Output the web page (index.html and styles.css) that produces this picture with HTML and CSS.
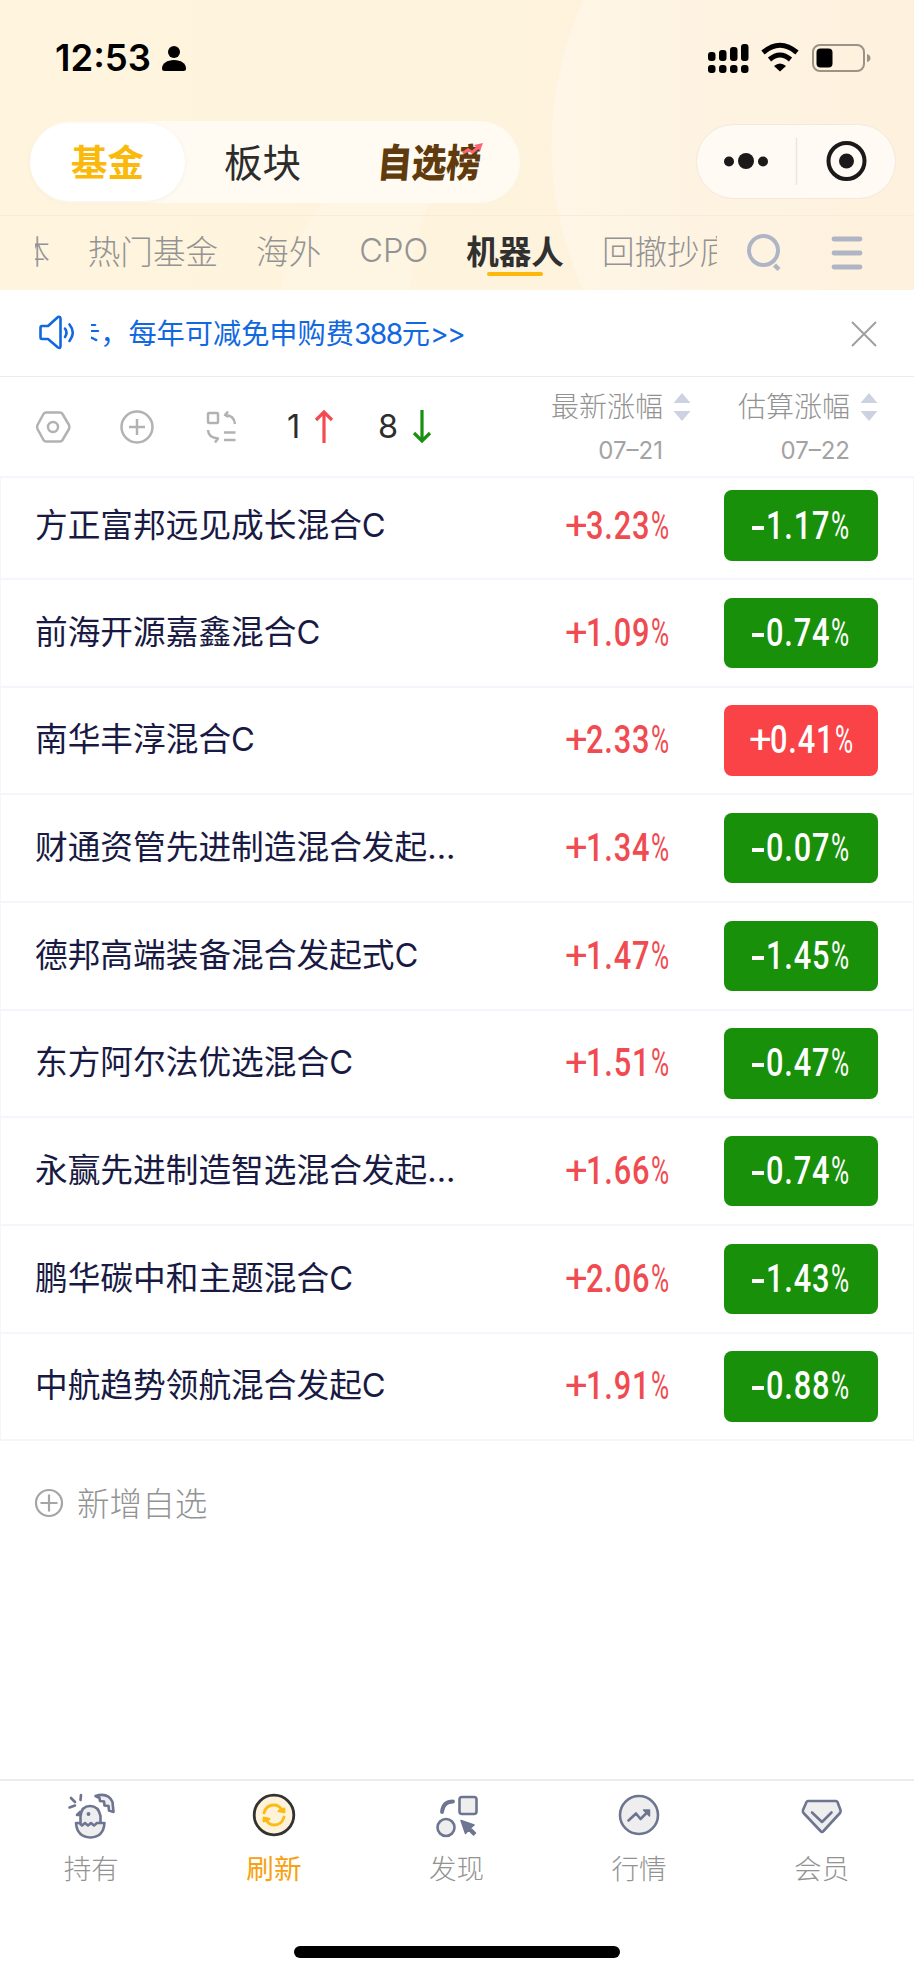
FILE: index.html
```html
<!DOCTYPE html>
<html lang="zh-CN">
<head>
<meta charset="utf-8">
<title>自选基金</title>
<link rel="stylesheet" href="styles.css">
</head>
<body>
<div class="app">
  <header class="header">
    <svg class="header-bg" width="914" height="290" viewBox="0 0 914 290">
      <defs>
        <linearGradient id="bg" x1="0" y1="0" x2="1" y2="0"><stop offset="0" stop-color="#fff5df"/><stop offset=".5" stop-color="#fef3dd"/><stop offset="1" stop-color="#fef1dd"/></linearGradient>
        <linearGradient id="arc" x1="0" y1="0" x2="1" y2="0"><stop offset="0" stop-color="#fff6e7"/><stop offset=".45" stop-color="#fef3e1"/><stop offset="1" stop-color="#fef1de"/></linearGradient>
      </defs>
      <rect width="914" height="290" fill="url(#bg)"/>
      <path d="M583 0Q520 145 583 290H914V0Z" fill="url(#arc)"/>
      <path d="M325 200Q300 230 280 290H410Q415 240 430 200Z" fill="#fff8ea" opacity=".4"/>
    </svg>
    <div class="status">
      <span class="clock">12:53</span>
      <svg class="person" width="24" height="26" viewBox="0 0 24 26"><circle cx="12" cy="6" r="6"/><path d="M0 22.500C0 17.500 5 14 12 14S24 17.500 24 22.500Q24 25 21.500 25H2.500Q0 25 0 22.500Z"/></svg>
      <svg class="signal" width="164" height="32" viewBox="0 0 164 32">
        <g><rect x="0" y="9" width="7.500" height="9" rx="3"/><rect x="11" y="7" width="7.500" height="11" rx="3"/><rect x="22" y="4" width="7.500" height="14" rx="3"/><rect x="33" y="1" width="7.500" height="17" rx="3"/><rect x="0" y="22" width="7.500" height="8" rx="3"/><rect x="11" y="22" width="7.500" height="8" rx="3"/><rect x="22" y="22" width="7.500" height="8" rx="3"/><rect x="33" y="22" width="7.500" height="8" rx="3"/></g>
        <g fill="none" stroke="#000" stroke-width="5"><path d="M55 9.500Q72 -5 89 9.500"/><path d="M61.500 16.500Q72 7.500 82.500 16.500"/></g>
        <path d="M66 23Q72 18 78 23L72 28.500Z"/>
        <rect x="105" y="2" width="51" height="26" rx="7" fill="none" stroke="#9b9383" stroke-width="2"/><rect x="108.500" y="5.500" width="16" height="19" rx="4"/><path d="M159 11Q162.500 12 162.500 15T159 19Z" fill="#9b9383"/>
      </svg>
    </div>
    <div class="switcher">
      <div class="segments">
        <div class="segment segment-on">基金</div>
        <div class="segment">板块</div>
        <div class="segment segment-rank"><span class="rank">自选榜</span>
          <svg class="rank-arrow" width="22" height="14" viewBox="0 0 22 14"><path d="M0 10L6 6L10 8.500L14 5L12 3L21 1L18 9L16.500 7L10.500 12L7 9.500L2 12Z" fill="#fd6570"/></svg>
        </div>
      </div>
      <svg class="capsule" width="200" height="76" viewBox="0 0 200 76">
        <rect x=".5" y=".5" width="199" height="74" rx="37" fill="#fffaf3" stroke="#f2e9dc"/>
        <circle cx="33" cy="37.500" r="5" fill="#1b191a"/><circle cx="50" cy="37" r="8" fill="#1b191a"/><circle cx="67" cy="37.500" r="5" fill="#1b191a"/>
        <path d="M100.500 14V61" stroke="#ece5dc" stroke-width="1.500"/>
        <circle cx="150.500" cy="37" r="18" fill="none" stroke="#1b191a" stroke-width="4"/><circle cx="150.500" cy="37" r="7.500" fill="#1b191a"/>
      </svg>
    </div>
    <nav class="groups">
      <div class="group-scroll">
        <span class="group">半导体</span><span class="group">热门基金</span><span class="group">海外</span><span class="group latin">CPO</span><span class="group group-on">机器人</span><span class="group">回撤抄底</span>
      </div>
      <svg class="group-tools" width="120" height="40" viewBox="0 0 120 40" fill="none" stroke="#b0b5c5" stroke-width="4">
        <circle cx="17.500" cy="18.500" r="14.500"/><path d="M28.500 33L33 37.500" stroke-width="4.500"/><path d="M88 7H114M88 21H114M88 35H114" stroke-width="4.800" stroke-linecap="round"/>
      </svg>
    </nav>
  </header>

  <div class="notice">
    <svg class="horn" width="36" height="36" viewBox="0 0 36 36" fill="none" stroke="#1268df" stroke-width="2.600" stroke-linejoin="round" stroke-linecap="round"><path d="M3 11H9L19 2Q21.500 1 21.500 4V31Q21.500 34 19 32.500L9 24H3Q1.500 24 1.500 22V13Q1.500 11 3 11Z"/><path d="M26 13.500Q29 17.500 26 22M30.500 9.500Q37 17.500 30.500 26"/></svg>
    <div class="notice-clip"><span class="notice-text">卡，每年可减免申购费<span class="latin">388</span>元<span class="latin">&gt;&gt;</span></span></div>
    <svg class="close" width="26" height="26" viewBox="0 0 26 26" stroke="#a0a0a0" stroke-width="2"><path d="M1 1L25 25M25 1L1 25"/></svg>
  </div>

  <div class="toolbar">
    <svg class="tools" width="202" height="34" viewBox="0 0 202 34" fill="none" stroke="#b2b2b2" stroke-width="2.500" stroke-linejoin="round">
      <path d="M10 2.500H24Q25.500 2.500 26.500 4L33 15Q34 17 33 19L26.500 30Q25.500 31.500 24 31.500H10Q8.500 31.500 7.500 30L1.500 19Q.5 17 1.500 15L7.500 4Q8.500 2.500 10 2.500Z"/><circle cx="17" cy="17" r="5"/>
      <circle cx="101" cy="17" r="15.500"/><path d="M93 17H109M101 9V25"/>
      <rect x="172" y="3" width="10" height="10" rx="1"/><path d="M192 1.500L189 5L192.500 7M189 5Q198 5 199 14M172 20Q172.500 28 182 28.500M179 32.500L182 28.500L177.500 27.500M188 22.500H199.500M188 30H199.500"/>
    </svg>
    <div class="count"><span>1</span><svg width="20" height="34" viewBox="0 0 20 34" fill="none" stroke="#f24b51" stroke-width="3.200"><path d="M10 33V2M2 10L10 2L18 10"/></svg></div>
    <div class="count count-down"><span>8</span><svg width="20" height="34" viewBox="0 0 20 34" fill="none" stroke="#1a9010" stroke-width="3.200"><path d="M10 0V31M2 23L10 31L18 23"/></svg></div>
    <div class="sort sort-latest"><div class="sort-title">最新涨幅</div><svg width="18" height="28" viewBox="0 0 18 28"><path d="M9 0L17.500 10H.5ZM9 28L17.500 18H.5Z" fill="#ccd2e2"/></svg><div class="sort-date">07–21</div></div>
    <div class="sort"><div class="sort-title">估算涨幅</div><svg width="18" height="28" viewBox="0 0 18 28"><path d="M9 0L17.500 10H.5ZM9 28L17.500 18H.5Z" fill="#ccd2e2"/></svg><div class="sort-date">07–22</div></div>
  </div>

  <main class="list">
    <div class="row row-first"><span class="name">方正富邦远见成长混合C</span><span class="latest num"><i class="plus">+</i><b>3.23</b><i class="pct">%</i></span><span class="badge num"><i class="minus"></i><b>1.17</b><i class="pct">%</i></span></div>
    <div class="row"><span class="name">前海开源嘉鑫混合C</span><span class="latest num"><i class="plus">+</i><b>1.09</b><i class="pct">%</i></span><span class="badge num"><i class="minus"></i><b>0.74</b><i class="pct">%</i></span></div>
    <div class="row"><span class="name">南华丰淳混合C</span><span class="latest num"><i class="plus">+</i><b>2.33</b><i class="pct">%</i></span><span class="badge badge-up num"><i class="plus">+</i><b>0.41</b><i class="pct">%</i></span></div>
    <div class="row"><span class="name">财通资管先进制造混合发起...</span><span class="latest num"><i class="plus">+</i><b>1.34</b><i class="pct">%</i></span><span class="badge num"><i class="minus"></i><b>0.07</b><i class="pct">%</i></span></div>
    <div class="row"><span class="name">德邦高端装备混合发起式C</span><span class="latest num"><i class="plus">+</i><b>1.47</b><i class="pct">%</i></span><span class="badge num"><i class="minus"></i><b>1.45</b><i class="pct">%</i></span></div>
    <div class="row"><span class="name">东方阿尔法优选混合C</span><span class="latest num"><i class="plus">+</i><b>1.51</b><i class="pct">%</i></span><span class="badge num"><i class="minus"></i><b>0.47</b><i class="pct">%</i></span></div>
    <div class="row"><span class="name">永赢先进制造智选混合发起...</span><span class="latest num"><i class="plus">+</i><b>1.66</b><i class="pct">%</i></span><span class="badge num"><i class="minus"></i><b>0.74</b><i class="pct">%</i></span></div>
    <div class="row"><span class="name">鹏华碳中和主题混合C</span><span class="latest num"><i class="plus">+</i><b>2.06</b><i class="pct">%</i></span><span class="badge num"><i class="minus"></i><b>1.43</b><i class="pct">%</i></span></div>
    <div class="row"><span class="name">中航趋势领航混合发起C</span><span class="latest num"><i class="plus">+</i><b>1.91</b><i class="pct">%</i></span><span class="badge num"><i class="minus"></i><b>0.88</b><i class="pct">%</i></span></div>
  </main>

  <div class="add">
    <svg width="28" height="28" viewBox="0 0 28 28" fill="none" stroke="#a5a5a5" stroke-width="2.200"><circle cx="14" cy="14" r="13"/><path d="M5.500 14H22.500M14 5.500V22.500"/></svg>
    <span>新增自选</span>
  </div>

  <footer class="tabbar">
    <div class="tab"><svg width="50" height="50" viewBox="0 0 50 50" fill="none" stroke="#6e7591" stroke-width="2.600" stroke-linejoin="round" stroke-linecap="round"><path d="M5 8L9 12M15 5L14.500 10M3.500 17.500L9 15.500"/><path d="M14.500 33V26Q15.500 16 24 16T34.500 26V33" fill="#eee"/><path d="M14 22L11 25H14"/><path d="M10 33H13.500L16 35.500L19 33L22 35.500L25 33L28 35.500L31 33H38.500Q37.500 47 24.500 47.500Q11 47 10 33Z" fill="#eee"/><path d="M29.500 6Q42 2 46.500 12L47.500 22L43 20.500L42.500 16L38.500 15.500L38 11.500L34 11L33.500 8Z" fill="#eee"/><circle cx="22.500" cy="24" r="1.200" fill="#6e7591" stroke-width="1.500"/></svg><span>持有</span></div>
    <div class="tab tab-on"><svg width="50" height="50" viewBox="0 0 50 50" fill="none"><circle cx="25" cy="25" r="19.800" fill="#fff2da" stroke="#323232" stroke-width="2.800"/><g stroke="#fbbb13" stroke-width="2.800" stroke-linecap="round" stroke-linejoin="round"><path d="M15 23Q17 15 25 15Q30 15 33 20M35 27Q33 35 25 35Q20 35 17 30"/><path d="M35 19V22L30 21ZM15 31V28L20 29Z" fill="#fbbb13"/></g></svg><span>刷新</span></div>
    <div class="tab"><svg width="50" height="50" viewBox="0 0 50 50" fill="none" stroke="#6e7591" stroke-width="2.600" stroke-linejoin="round" stroke-linecap="round"><path d="M11 22Q12 11.500 22 11.500" stroke-width="3.800"/><circle cx="15" cy="37.500" r="8.500" fill="#eee"/><rect x="28.500" y="7" width="17" height="17" rx="2.500" fill="#eee"/><path d="M30 30.500L43 35L39.500 38L44.500 43L42.500 45L37.500 40L34.500 43.500Z" fill="#6e7591" stroke-width="1.500"/></svg><span>发现</span></div>
    <div class="tab"><svg width="50" height="50" viewBox="0 0 50 50" fill="none" stroke="#6e7591" stroke-width="2.600" stroke-linejoin="round" stroke-linecap="round"><circle cx="25" cy="25" r="19" fill="#eee"/><path d="M14.500 30.500L22 23.500L26.500 29L33.500 22"/><path d="M29.500 20H35.500V26Z" fill="#6e7591" stroke-width="1.500"/></svg><span>行情</span></div>
    <div class="tab"><svg width="50" height="50" viewBox="0 0 50 50" fill="none" stroke="#6e7591" stroke-width="2.600" stroke-linejoin="round" stroke-linecap="round"><path d="M11 11H39Q40 11 40.500 12L43.500 20Q44 22 43 23L26.500 41Q25 43 23.500 41L6.500 23Q5.500 22 6 20L9.500 12Q10 11 11 11Z" fill="#eee"/><path d="M15 22.500L25 32L34.500 22.500"/></svg><span>会员</span></div>
  </footer>
  <div class="home"></div>
</div>
</body>
</html>
```
FILE: styles.css
```css
* { box-sizing: border-box; }
body { margin: 0; background: #fff; font-family: "Noto Sans CJK SC", sans-serif; }
svg { display: block; flex: none; overflow: visible; }
.app { width: 914px; height: 1977px; display: flex; flex-direction: column; overflow: hidden; }
.latin { font-family: Inter, sans-serif; }

.header { position: relative; height: 290px; flex: none; }
.header-bg { position: absolute; inset: 0; z-index: -1; }
.status { height: 120px; display: flex; align-items: flex-start; padding: 0 42px 0 55px; }
.clock { font: 600 36.500px/42px Inter, sans-serif; margin-top: 37px; width: 98px; white-space: nowrap; }
.person { margin: 46px 0 0 9px; }
.signal { margin: 43px 0 0 auto; }
.switcher { height: 96px; display: flex; justify-content: space-between; padding: 1px 18px 0 30px; border-bottom: 1px solid #f7ecd9; }
.segments { width: 490px; height: 82px; border-radius: 41px; background: rgba(255, 255, 255, .62); display: flex; padding: 2px 0; }
.segment { width: 155px; height: 78px; border-radius: 39px; font-size: 38.500px; line-height: 75px; color: #2c2c2c; text-align: center; }
.segment-on { background: #fff; color: #fbb90c; font-size: 36.500px; font-weight: 700; box-shadow: 0 1px 5px rgba(120, 90, 20, .06); }
.segment-rank { position: relative; width: 180px; }
.rank { display: inline-block; font-size: 39px; font-weight: 900; color: #603b0e; transform: skewX(-5deg) scaleX(.88); }
.rank-arrow { position: absolute; left: 122px; top: 19px; }
.capsule { margin-top: 3px; }
.groups { height: 74px; display: flex; justify-content: space-between; padding: 0 48px 0 35px; }
.group-scroll { width: 682px; display: flex; gap: 38px; overflow: hidden; }
.group { font-size: 32.600px; font-weight: 300; line-height: 68px; color: #939393; white-space: nowrap; }
.group:first-child { margin-left: -83px; }
.group-on { color: #303030; font-weight: 700; position: relative; }
.group-on::after { content: ""; position: absolute; left: 21px; top: 56px; width: 56px; height: 4px; border-radius: 2px; background: #fcb90b; }
.group-tools { margin-top: 16px; width: 120px; }

.notice { height: 87px; flex: none; border-bottom: 1px solid #ebebeb; display: flex; align-items: center; padding: 0 37px 0 39px; }
.horn { margin-top: -1px; }
.notice-clip { margin-left: 16px; width: 400px; overflow: hidden; }
.notice-text { display: block; margin-left: -19px; font-size: 28.200px; line-height: 60px; color: #1268df; white-space: nowrap; }
.notice-text .latin { letter-spacing: -1.500px; }
.close { margin-left: auto; margin-top: 1px; }

.toolbar { height: 99px; flex: none; display: flex; padding: 0 36px 0 36px; }
.tools { margin-top: 33px; }
.count { display: flex; margin: 33px 0 0 49px; gap: 14px; width: 48px; }
.count span { font: 400 32.500px/34px Inter, sans-serif; color: #2d2d2d; }
.count-down { margin-left: 43px; width: 54px; }
.sort { display: grid; grid-template-columns: 112px 18px; column-gap: 10px; margin-left: 47px; align-content: start; padding-top: 8px; }
.sort-latest { margin-left: auto; }
.sort svg { margin-top: 8px; }
.sort-title { font-size: 28px; font-weight: 300; line-height: 40px; color: #939393; white-space: nowrap; }
.sort-date { font: 400 24px/36px Inter, sans-serif; color: #a3a3a3; text-align: right; margin-top: 8px; padding-right: 0; }

.list { flex: none; border: 2px solid #f5f6fb; border-left-width: 1px; border-right-width: 1px; }
.row { height: 107.670px; border-bottom: 2px solid #f5f6fb; display: flex; align-items: center; padding: 0 35px 0 34px; }
.row:last-child { border-bottom: 0; height: 105.500px; }
.row-first { height: 102px; padding-bottom: 5px; }
.name { font-family: Inter, "Noto Sans CJK SC", sans-serif; font-size: 32.700px; line-height: 48px; color: #191a43; width: 512px; white-space: nowrap; margin-top: -2px; }
.num { display: flex; align-items: center; font-family: Roboto, sans-serif; font-size: 38px; line-height: 44px; }
.num b, .num i { font-style: normal; font-weight: 500; display: block; flex: none; transform-origin: 0 50%; }
.num b { width: 65px; transform: scaleX(.81); letter-spacing: 1px; }
.num .plus { width: 21px; font-weight: 400; transform: scaleX(1.05); }
.num .minus { width: 12px; height: 4px; background: currentColor; margin: 4px 2px 0 0; }
.num .pct { width: 18px; font-weight: 400; transform: scaleX(.65); }
.latest { color: #f04b50; width: 154px; padding-left: 17px; margin-left: 1px; }
.badge { width: 154.500px; height: 70.500px; margin-left: auto; border-radius: 8px; color: #fff; background: #19900a; justify-content: center; }
.badge-up { background: #f94347; }

.add { display: flex; align-items: center; gap: 14px; padding: 40px 0 0 35px; font-size: 32.600px; font-weight: 300; line-height: 46px; color: #939393; }
.add span { margin-top: -2px; }
.tabbar { margin-top: auto; height: 150px; flex: none; border-top: 2px solid #ebebeb; display: grid; grid-template-columns: repeat(5, 182.600px); }
.tab { display: flex; flex-direction: column; align-items: center; padding-top: 9px; font-size: 27.600px; font-weight: 300; line-height: 40px; gap: 7px; color: #939393; }
.tab-on { color: #f8a110; font-weight: 400; }
.home { width: 326px; height: 12px; border-radius: 6px; background: #000; margin: 17px 0 19px 294px; flex: none; }
```
